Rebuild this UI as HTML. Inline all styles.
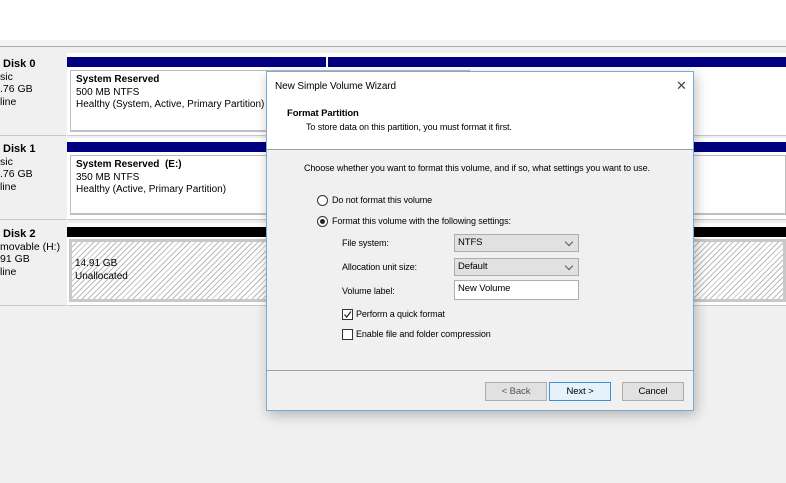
<!DOCTYPE html>
<html><head><meta charset="utf-8">
<style>
*{margin:0;padding:0;box-sizing:border-box}
body{width:786px;height:483px;overflow:hidden;background:#f0f0f0;font-family:"Liberation Sans",sans-serif;font-size:10px;color:#000;position:relative}
.abs{position:absolute}
.top{left:0;top:0;width:786px;height:40px;background:#fff}
.strip{left:0;top:40px;width:786px;height:7px;background:#f4f4f4;border-bottom:1px solid #a8a8a8}
.lab{left:0;width:66px;background:#f0f0f0;border-bottom:1px solid #c8c8c8;line-height:12.5px;padding-top:5px;font-size:10.5px}
.lab b{display:block;font-size:11px}
.right{left:67px;width:719px;background:#fff;border-bottom:1px solid #c8c8c8}
.bar{height:10px;background:#000080}
.box{background:#fff;border:1px solid #bdbdbd;border-bottom:2px solid #c0c0c0;line-height:12.5px;padding:3px 5px;font-size:10px}
.hatch{background:repeating-linear-gradient(135deg,#fff 0 3px,#bbb 3px 4px);border:3px solid #c8c8c8}
.dlg{left:266px;top:71px;width:428px;height:340px;border:1px solid #7aaad8;background:#f0f0f0;box-shadow:2px 4px 12px rgba(0,0,0,.25);font-size:9px;letter-spacing:-0.1px}
.hdr{position:absolute;left:0;top:0;width:426px;height:78px;background:#fff;border-bottom:1px solid #a0a0a0}
.sel{position:absolute;left:187px;width:125px;height:18px;background:#e1e1e1;border:1px solid #adadad;padding:2px 3px;font-size:9.5px}
.sel.dd:after{content:"";position:absolute;right:6px;top:4px;width:5px;height:5px;border-right:1px solid #555;border-bottom:1px solid #555;transform:rotate(45deg)}
.btn{position:absolute;top:310px;width:62px;height:19px;background:#e1e1e1;border:1px solid #adadad;text-align:center;line-height:17px;font-size:9.5px}
.rad{position:absolute;width:11px;height:11px;border:1px solid #333;border-radius:50%;background:#fff}
.chk{position:absolute;width:11px;height:11px;border:1px solid #333;background:#fff}
</style></head><body>
<div class="abs top"></div>
<div class="abs strip"></div>

<div class="abs lab" style="top:53px;height:83px"><b>&nbsp;Disk 0</b>sic<br>.76 GB<br>line</div>
<div class="abs right" style="top:53px;height:83px">
  <div class="abs bar" style="left:0;top:4px;width:259px"></div>
  <div class="abs bar" style="left:261px;top:4px;width:458px"></div>
  <div class="abs box" style="left:3px;top:17px;width:400px;height:62px"><b>System Reserved</b><br>500 MB NTFS<br>Healthy (System, Active, Primary Partition)</div>
</div>
<div class="abs lab" style="top:138px;height:82px"><b>&nbsp;Disk 1</b>sic<br>.76 GB<br>line</div>
<div class="abs right" style="top:138px;height:82px">
  <div class="abs bar" style="left:0;top:4px;width:719px"></div>
  <div class="abs box" style="left:3px;top:17px;width:716px;height:60px"><b>System Reserved &nbsp;(E:)</b><br>350 MB NTFS<br>Healthy (Active, Primary Partition)</div>
</div>
<div class="abs lab" style="top:223px;height:83px"><b>&nbsp;Disk 2</b>movable (H:)<br>91 GB<br>line</div>
<div class="abs right" style="top:223px;height:83px">
  <div class="abs bar" style="left:0;top:4px;width:719px;background:#000"></div>
  <div class="abs hatch" style="left:2px;top:16px;width:717px;height:63px"></div>
  <div class="abs" style="left:8px;top:35px;line-height:12.5px">14.91 GB<br>Unallocated</div>
</div>

<div class="abs dlg">
  <div class="hdr">
    <div class="abs" style="left:8px;top:9px;font-size:10px">New Simple Volume Wizard</div>
    <div class="abs" style="left:409px;top:6px;font-size:13px;color:#444">✕</div>
    <div class="abs" style="left:20px;top:36px;font-weight:bold;font-size:9.5px">Format Partition</div>
    <div class="abs" style="left:39px;top:50px">To store data on this partition, you must format it first.</div>
  </div>
  <div class="abs" style="left:37px;top:91px">Choose whether you want to format this volume, and if so, what settings you want to use.</div>
  <div class="rad" style="left:50px;top:123px"></div>
  <div class="abs" style="left:65px;top:123px">Do not format this volume</div>
  <div class="rad" style="left:50px;top:144px"><div style="position:absolute;left:2px;top:2px;width:5px;height:5px;border-radius:50%;background:#222"></div></div>
  <div class="abs" style="left:65px;top:144px">Format this volume with the following settings:</div>
  <div class="abs" style="left:75px;top:166px">File system:</div>
  <div class="sel dd" style="top:162px">NTFS</div>
  <div class="abs" style="left:75px;top:190px">Allocation unit size:</div>
  <div class="sel dd" style="top:186px">Default</div>
  <div class="abs" style="left:75px;top:214px">Volume label:</div>
  <div class="sel" style="top:208px;height:20px;background:#fff;padding-top:2px">New Volume</div>
  <div class="chk" style="left:75px;top:237px"><svg width="9" height="9" style="position:absolute;left:0;top:0"><path d="M1.5 4.5 L3.7 7 L8 1.5" stroke="#222" stroke-width="1.2" fill="none"/></svg></div>
  <div class="abs" style="left:89px;top:237px">Perform a quick format</div>
  <div class="chk" style="left:75px;top:257px"></div>
  <div class="abs" style="left:89px;top:257px">Enable file and folder compression</div>
  <div class="abs" style="left:0;top:298px;width:426px;border-top:1px solid #a0a0a0"></div>
  <div class="btn" style="left:218px;color:#555">&lt; Back</div>
  <div class="btn" style="left:282px;border-color:#3c8fd8;background:#e5f1fb">Next &gt;</div>
  <div class="btn" style="left:355px">Cancel</div>
</div>
</body></html>
